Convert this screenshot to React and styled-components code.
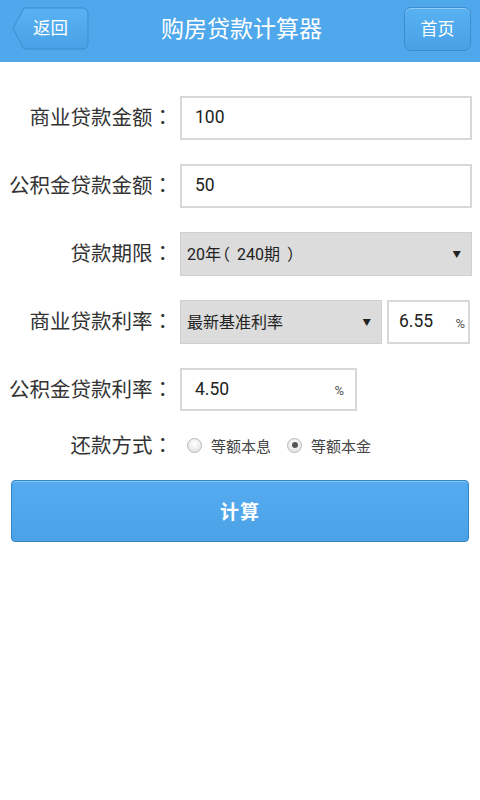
import React, { useState } from "react";
import styled, { createGlobalStyle } from "styled-components";

const GlobalStyle = createGlobalStyle`
    html, body {
        margin: 0;
        padding: 0;
        background: #ffffff;
    }
    body {
        font-family: Roboto, "Noto Sans CJK SC", sans-serif;
        color: #333333;
    }
`;

const Page = styled.div`
    width: 480px;
    min-height: 800px;
    background: #ffffff;
`;

const Header = styled.div`
    height: 62px;
    background: #4fa8ec;
    display: grid;
    grid-template-columns: 1fr auto 1fr;
    align-items: center;
    padding: 0 9px 0 12px;
    box-sizing: border-box;
`;

const Title = styled.div`
    color: #ffffff;
    font-size: 23px;
    margin-top: -9px;
`;

const BackButton = styled.button`
    position: relative;
    justify-self: start;
    width: 77px;
    height: 43px;
    margin-top: -6px;
    padding: 0 0 3px 0;
    border: none;
    background: transparent;
    color: #ffffff;
    font-family: inherit;
    font-size: 17.5px;
    cursor: pointer;
    & svg {
        position: absolute;
        left: 0;
        top: 0;
    }
    & span {
        position: relative;
    }
`;

const HomeButton = styled.button`
    justify-self: end;
    width: 67px;
    height: 44px;
    margin-top: -4px;
    padding: 0 0 3px 0;
    border: 1px solid #3d8ccc;
    border-radius: 7px;
    background: linear-gradient(#58b1f1, #4aa2e6);
    box-shadow: inset 0 1px 0 rgba(255, 255, 255, 0.35);
    color: #ffffff;
    font-family: inherit;
    font-size: 17px;
    cursor: pointer;
`;

const Form = styled.div`
    display: flex;
    flex-direction: column;
    gap: 24px;
    padding: 34px 8px 0 8px;
`;

const Row = styled.div`
    display: flex;
    align-items: center;
    height: ${(props) => props.h || 44}px;
`;

const Label = styled.div`
    flex: 0 0 172px;
    box-sizing: border-box;
    text-align: right;
    font-size: 20.5px;
    color: #333333;
    white-space: nowrap;
    padding: 0 7px 4px 0;
`;

const Colon = styled.span`
    font-family: "Noto Sans CJK TC", sans-serif;
`;

const Paren = styled.span`
    display: inline-block;
    font-feature-settings: "halt";
    margin-left: ${(props) => props.ml || 0}px;
    margin-right: ${(props) => props.mr || 0}px;
`;

const Fields = styled.div`
    flex: 1;
    display: flex;
    align-items: center;
    gap: 5px;
    height: 100%;
`;

const Box = styled.div`
    box-sizing: border-box;
    height: 100%;
    width: ${(props) => props.w || "100%"};
    border: 2px solid #d8d8d8;
    background: #ffffff;
    display: flex;
    align-items: center;
    & input {
        border: none;
        outline: none;
        background: transparent;
        width: 100%;
        height: 100%;
        padding: 0 0 2px ${(props) => props.pad || 13}px;
        font-family: inherit;
        font-size: 17.5px;
        color: #222222;
        box-sizing: border-box;
    }
`;

const Unit = styled.span`
    font-size: 13px;
    color: #555555;
    padding-right: ${(props) => props.pr || 10}px;
    margin-top: 2px;
`;

const Select = styled.div`
    box-sizing: border-box;
    height: 100%;
    width: ${(props) => props.w || "100%"};
    background: #dcdcdc;
    border: 1px solid #d0d0d0;
    display: flex;
    align-items: center;
    justify-content: space-between;
    padding: 0 10px 2px 6px;
    font-size: 16px;
    color: #222222;
    cursor: pointer;
`;

const Arrow = styled.span`
    font-size: 8.5px;
    color: #222222;
`;

const RadioGroup = styled.div`
    display: flex;
    align-items: center;
    gap: 16px;
    padding: 0 0 2px 7px;
`;

const RadioOption = styled.label`
    display: flex;
    align-items: center;
    gap: 9px;
    font-size: 15px;
    color: #444444;
    cursor: pointer;
`;

const RadioDot = styled.span`
    width: 15px;
    height: 15px;
    border-radius: 50%;
    border: 1px solid #b8b8b8;
    background: radial-gradient(circle at 50% 35%, #ffffff, #dcdcdc);
    box-sizing: border-box;
    display: flex;
    align-items: center;
    justify-content: center;
    &::after {
        content: "";
        width: 6px;
        height: 6px;
        border-radius: 50%;
        background: ${(props) => (props.checked ? "#555555" : "transparent")};
    }
`;

const CalcButton = styled.button`
    margin: 23px 3px 0 3px;
    height: 62px;
    padding-bottom: 3px;
    border: 1px solid #2f86c6;
    border-radius: 4px;
    background: linear-gradient(#55abf0, #4ba2e6);
    box-shadow: inset 0 1px 0 rgba(255, 255, 255, 0.3);
    color: #ffffff;
    font-family: inherit;
    font-size: 19px;
    font-weight: bold;
    letter-spacing: 1px;
    cursor: pointer;
`;

const BackShape = () => (
    <svg width="77" height="43" viewBox="0 0 77 43">
        <defs>
            <linearGradient id="backFill" x1="0" y1="0" x2="0" y2="1">
                <stop offset="0" stopColor="#58b2f3" />
                <stop offset="1" stopColor="#4aa2e6" />
            </linearGradient>
        </defs>
        <path
            d="M1 21.5 L12 1 H70 Q76 1 76 7 V36 Q76 42 70 42 H12 Z"
            fill="url(#backFill)"
            stroke="#3d8ccc"
            strokeWidth="1"
        />
    </svg>
);

const App = () => {
    const [mode, setMode] = useState("benjin");

    return (
        <Page>
            <GlobalStyle />
            <Header>
                <BackButton>
                    <BackShape />
                    <span>返回</span>
                </BackButton>
                <Title>购房贷款计算器</Title>
                <HomeButton>首页</HomeButton>
            </Header>
            <Form>
                <Row>
                    <Label>商业贷款金额<Colon>：</Colon></Label>
                    <Fields>
                        <Box>
                            <input defaultValue="100" />
                        </Box>
                    </Fields>
                </Row>
                <Row>
                    <Label>公积金贷款金额<Colon>：</Colon></Label>
                    <Fields>
                        <Box>
                            <input defaultValue="50" />
                        </Box>
                    </Fields>
                </Row>
                <Row>
                    <Label>贷款期限<Colon>：</Colon></Label>
                    <Fields>
                        <Select>
                            <span>
                                20年<Paren ml={1} mr={7}>（</Paren>240期<Paren ml={7}>）</Paren>
                            </span>
                            <Arrow>▼</Arrow>
                        </Select>
                    </Fields>
                </Row>
                <Row>
                    <Label>商业贷款利率<Colon>：</Colon></Label>
                    <Fields>
                        <Select w="202px">
                            最新基准利率
                            <Arrow>▼</Arrow>
                        </Select>
                        <Box w="83px" pad={10}>
                            <input defaultValue="6.55" />
                            <Unit pr={3}>%</Unit>
                        </Box>
                    </Fields>
                </Row>
                <Row h={43}>
                    <Label>公积金贷款利率<Colon>：</Colon></Label>
                    <Fields>
                        <Box w="177px">
                            <input defaultValue="4.50" />
                            <Unit pr={11}>%</Unit>
                        </Box>
                    </Fields>
                </Row>
                <Row h={22}>
                    <Label>还款方式<Colon>：</Colon></Label>
                    <RadioGroup>
                        <RadioOption onClick={() => setMode("benxi")}>
                            <RadioDot checked={mode === "benxi"} />
                            等额本息
                        </RadioOption>
                        <RadioOption onClick={() => setMode("benjin")}>
                            <RadioDot checked={mode === "benjin"} />
                            等额本金
                        </RadioOption>
                    </RadioGroup>
                </Row>
            </Form>
            <Form style={{ paddingTop: 0 }}>
                <CalcButton>计算</CalcButton>
            </Form>
        </Page>
    );
};

export default App;
